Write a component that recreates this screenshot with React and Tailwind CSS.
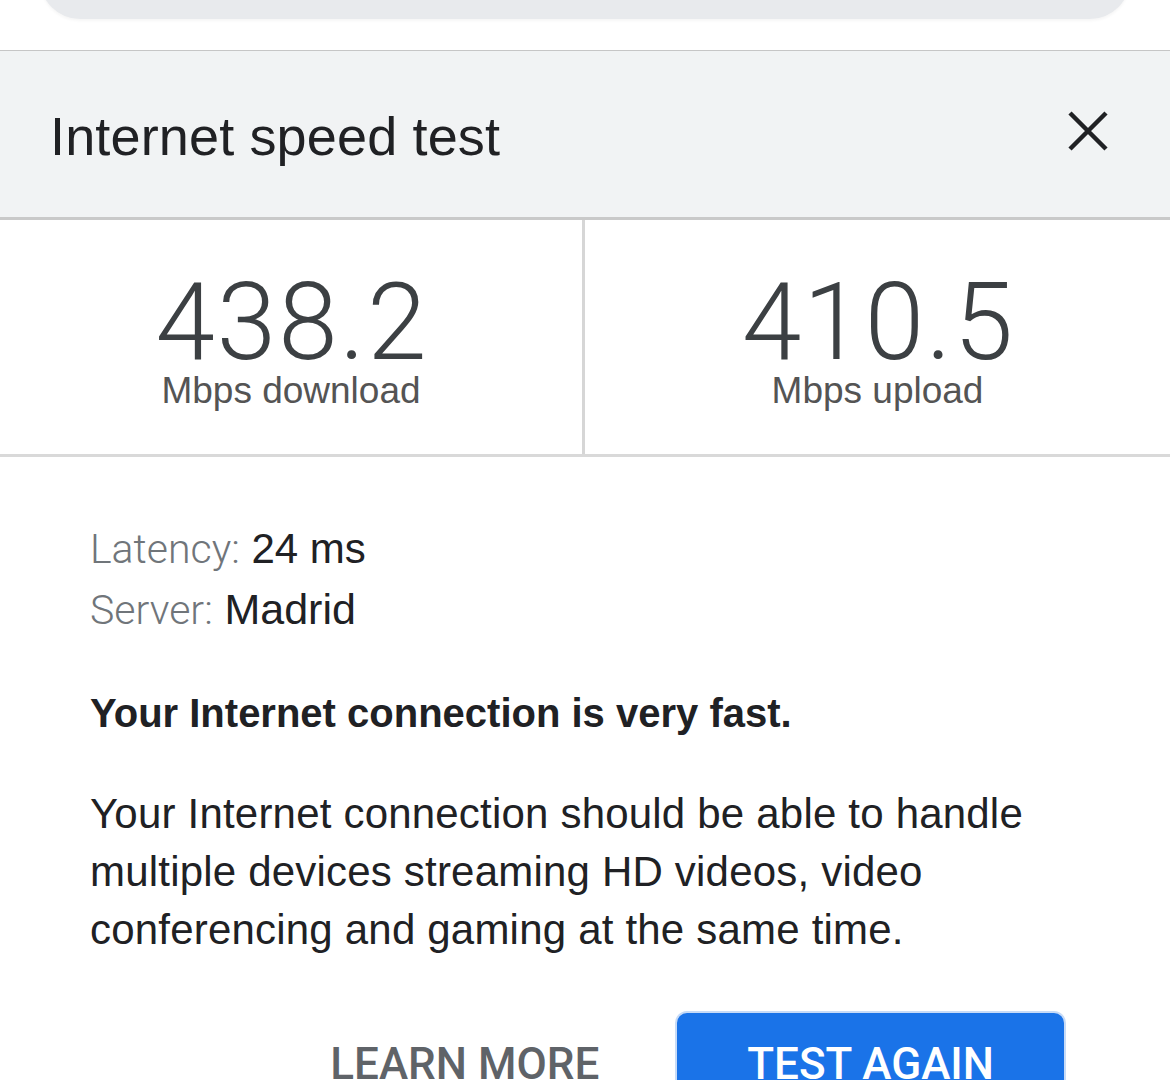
import React from "react";

export default function App() {
  return (
    <div className="w-[1170px] h-[1080px] overflow-hidden bg-white text-[#202124] font-['Liberation_Sans',Arial,sans-serif]">
      {/* top search bar remnant */}
      <div className="h-[50px] px-[40px] flex flex-col">
        <div className="mt-[-62px] h-[81px] shrink-0 rounded-[40px] bg-[#e8eaed] shadow-[0_2px_3px_rgba(0,0,0,0.04)]" />
      </div>

      {/* header */}
      <div className="h-[170px] bg-[#f1f3f4] border-t border-t-[#c6c6c6] border-b-[3px] border-b-[#c9c9c9] flex items-center justify-between pl-[50px] pr-[60px]">
        <div className="text-[54px] tracking-[0.15px] text-[#202124] leading-none mt-[4px]">Internet speed test</div>
        <svg width="44" height="44" viewBox="0 0 44 44" className="mt-[-6px]">
          <path d="M4 4 L40 40 M40 4 L4 40" stroke="#202124" strokeWidth="4.5" strokeLinecap="butt" />
        </svg>
      </div>

      {/* stats */}
      <div className="grid grid-cols-2 h-[237px] border-b-[3px] border-b-[#d9d9d9]">
        <div className="flex flex-col items-center pt-[49px] border-r-[3px] border-r-[#d6d6d6]">
          <div className="font-['Roboto',sans-serif] font-light text-[107px] leading-none text-[#3c4043] tracking-[2px] pl-[2px]">438.2</div>
          <div className="text-[37px] leading-none text-[#545454] mt-[-4px]">Mbps download</div>
        </div>
        <div className="flex flex-col items-center pt-[49px]">
          <div className="font-['Roboto',sans-serif] font-light text-[107px] leading-none text-[#3c4043] tracking-[2px] pl-[2px]">410.5</div>
          <div className="text-[37px] leading-none text-[#545454] mt-[-4px]">Mbps upload</div>
        </div>
      </div>

      {/* details */}
      <div className="pl-[90px] pr-[90px] pt-[62px]">
        <div className="text-[42px] leading-[60px]">
          <span className="text-[#70757a] font-['Roboto',sans-serif] font-light text-[41px]">Latency:</span>{" "}
          <span className="text-[#202124] text-[42px]">24 ms</span>
        </div>
        <div className="text-[42px] leading-[60px]">
          <span className="text-[#70757a] font-['Roboto',sans-serif] font-light text-[41px]">Server:</span>{" "}
          <span className="text-[#202124] text-[43px]">Madrid</span>
        </div>
        <div className="mt-[43px] text-[40px] leading-[60px] font-bold text-[#202124]">
          Your Internet connection is very fast.
        </div>
        <p className="mt-[42px] text-[42px] tracking-[0.2px] leading-[58px] text-[#202124]">
          Your Internet connection should be able to handle multiple devices streaming HD videos, video conferencing and gaming at the same time.
        </p>
      </div>

      {/* buttons */}
      <div className="flex justify-end items-start gap-[36px] pr-[104px] mt-[52px]">
        <button className="px-[40px] pt-[29px] pb-[27px] font-['Roboto',sans-serif] text-[44px] leading-[48px] font-medium text-[#5f6368]">
          LEARN MORE
        </button>
        <button className="px-[70px] pt-[27px] pb-[27px] rounded-[12px] bg-[#1a73e8] border-2 border-[#c7dbf7] font-['Roboto',sans-serif] text-[44px] leading-[48px] font-medium text-white">
          TEST AGAIN
        </button>
      </div>
    </div>
  );
}
